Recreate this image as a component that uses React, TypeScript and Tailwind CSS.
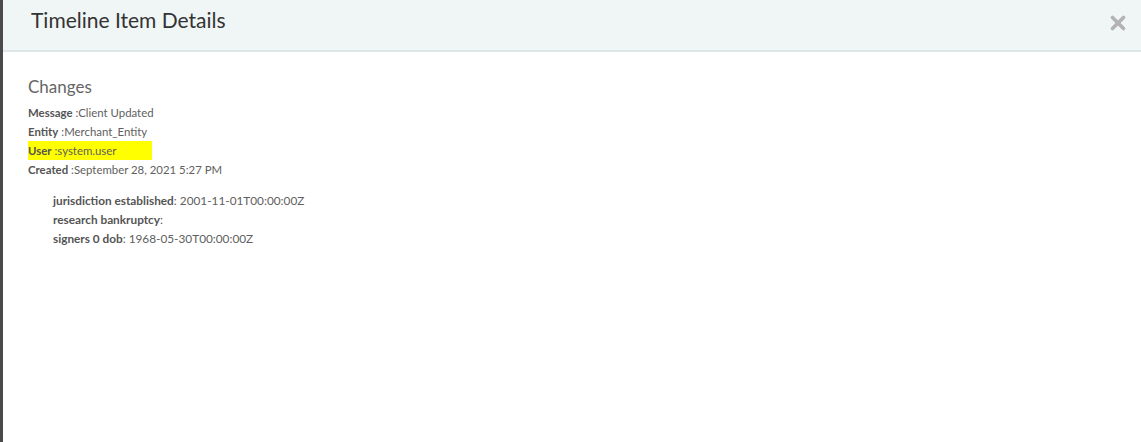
import { X } from "lucide-react";

type TField = { label: string; value: string; highlight?: boolean };

const fields: TField[] = [
  { label: "Message", value: "Client Updated" },
  { label: "Entity", value: "Merchant_Entity" },
  { label: "User", value: "system.user", highlight: true },
  { label: "Created", value: "September 28, 2021 5:27 PM" },
];

const changes = [
  { key: "jurisdiction established", value: "2001-11-01T00:00:00Z" },
  { key: "research bankruptcy", value: "" },
  { key: "signers 0 dob", value: "1968-05-30T00:00:00Z" },
];

export default function App() {
  return (
    <div className="flex h-[442px] w-[1141px] bg-white font-['Lato',sans-serif] text-[#606060]">
      <div className="w-[3px] shrink-0 bg-[#4a4a4a]" />
      <div className="flex flex-1 flex-col">
        <div className="flex h-[52px] items-start justify-between border-b-2 border-[#dde7e7] bg-[#f0f5f5] pl-[28px] pr-[12px]">
          <h2 className="pt-[7px] text-[21px] leading-[26px] text-[#333]">Timeline Item Details</h2>
          <X className="mt-[12px] h-[22px] w-[22px] text-[#b3b3b3]" strokeWidth={4} />
        </div>
        <div className="px-[25px] pt-[24px]">
          <h3 className="text-[17px] leading-[22px] text-[#666]">Changes</h3>
          <div className="mt-[5px] text-[11.4px] leading-[19px]">
            {fields.map((f) => (
              <div key={f.label}>
                <span className={f.highlight ? "inline-block w-[124px] bg-[#ffff00]" : ""}>
                  <b className="font-bold text-[#555]">{f.label}</b> :{f.value}
                </span>
              </div>
            ))}
          </div>
          <div className="mt-[12px] pl-[25px] text-[11.8px] leading-[19px]">
            {changes.map((c) => (
              <div key={c.key}>
                <b className="font-bold text-[#555]">{c.key}</b>: {c.value}
              </div>
            ))}
          </div>
        </div>
      </div>
    </div>
  );
}
